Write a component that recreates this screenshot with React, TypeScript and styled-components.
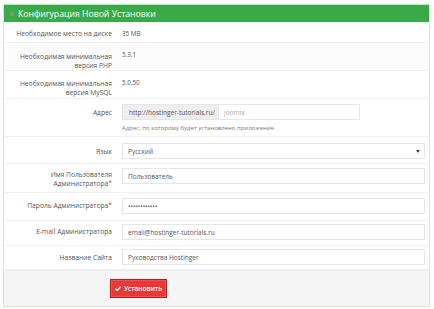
import React from 'react';
import styled, { createGlobalStyle } from 'styled-components';

const GlobalStyle = createGlobalStyle`
  html, body { margin: 0; padding: 0; background: #fff; }
  body { font-family: "Open Sans", "Liberation Sans", sans-serif; color: #555; }
`;

const Panel = styled.div`
  margin: 4px 4px 0 3px;
  border: 1px solid #cfeed1;
  border-top: none;
  background: #fff;
`;

const Header = styled.div`
  display: flex;
  align-items: center;
  gap: 4px;
  height: 17px;
  padding-left: 6px;
  background: #3aaa48;
  border-top: 1px solid #b9e6bd;
  color: #fff;
  font-size: 8.7px;
`;

const HeaderIcon = styled.span`
  width: 4px;
  height: 4px;
  background: #6f9f72;
  border-radius: 1px;
`;

const Row = styled.div<{ $h: number; $pt: number; $alt?: boolean }>`
  display: flex;
  align-items: flex-start;
  box-sizing: border-box;
  height: ${(p) => p.$h}px;
  padding-top: ${(p) => p.$pt}px;
  border-bottom: 1px solid #f1f1f1;
  background: ${(p) => (p.$alt ? '#fcfcfc' : '#fff')};
`;

const Label = styled.div<{ $pt?: number }>`
  width: 108px;
  padding-right: 10px;
  padding-top: ${(p) => p.$pt ?? 0}px;
  text-align: right;
  font-size: 6.7px;
  line-height: 9px;
  color: #555;
`;

const Req = styled.span`
  color: #e53935;
`;

const Field = styled.div`
  flex: 1;
  padding-right: 4px;
  display: flex;
  flex-direction: column;
`;

const Value = styled.div`
  font-size: 6.3px;
  line-height: 9px;
  color: #555;
`;

const InputBox = styled.div<{ $width?: number; $muted?: boolean }>`
  box-sizing: border-box;
  height: 16px;
  ${(p) => (p.$width ? `width: ${p.$width}px;` : '')}
  display: flex;
  align-items: center;
  padding: 0 5px;
  border: 1px solid #e6e6e6;
  background: #fff;
  font-size: 6.5px;
  color: ${(p) => (p.$muted ? '#aaa' : '#555')};
  position: relative;
`;

const Group = styled.div`
  display: flex;
`;

const Addon = styled.div`
  box-sizing: border-box;
  height: 16px;
  width: 96px;
  display: flex;
  align-items: center;
  padding-left: 6px;
  background: #eee;
  border: 1px solid #e6e6e6;
  border-right: none;
  font-size: 6.5px;
  color: #555;
`;

const Help = styled.div`
  margin-top: 4px;
  font-size: 6px;
  color: #777;
`;

const Arrow = styled.span`
  position: absolute;
  right: 4px;
  top: 6px;
  width: 0;
  height: 0;
  border-left: 2px solid transparent;
  border-right: 2px solid transparent;
  border-top: 3px solid #444;
`;

const Footer = styled.div`
  display: flex;
  justify-content: center;
  padding: 8px 156px 8px 0;
  height: 19px;
  background: #f5f5f5;
  border-top: 1px solid #ececec;
`;

const Button = styled.button`
  box-sizing: border-box;
  width: 57px;
  height: 19px;
  display: flex;
  align-items: center;
  justify-content: center;
  gap: 3px;
  padding: 0;
  background: #e53935;
  border: 1px solid #b71c1c;
  box-shadow: inset 0 0 0 1px #ef5350;
  color: #fff;
  font-family: "Open Sans", "Liberation Sans", sans-serif;
  font-size: 6.5px;
  font-weight: 600;
`;

export default function App() {
  return (
    <>
      <GlobalStyle />
      <Panel>
        <Header>
          <HeaderIcon />
          Конфигурация Новой Установки
        </Header>
        <Row $h={21} $pt={7}>
          <Label>Необходимое место на диске</Label>
          <Field><Value>35 MB</Value></Field>
        </Row>
        <Row $h={28} $pt={7} $alt>
          <Label $pt={2}>Необходимая минимальная<br />версия PHP</Label>
          <Field><Value>5.3.1</Value></Field>
        </Row>
        <Row $h={28} $pt={7}>
          <Label $pt={1}>Необходимая минимальная<br />версия MySQL</Label>
          <Field><Value>5.0.50</Value></Field>
        </Row>
        <Row $h={38} $pt={5}>
          <Label $pt={4}>Адрес</Label>
          <Field>
            <Group>
              <Addon>http://hostinger-tutorials.ru/</Addon>
              <InputBox $width={142} $muted>joomla</InputBox>
            </Group>
            <Help>Адрес, по которому будет установлено приложение.</Help>
          </Field>
        </Row>
        <Row $h={27} $pt={6}>
          <Label $pt={4}>Язык</Label>
          <Field>
            <InputBox>Русский<Arrow /></InputBox>
          </Field>
        </Row>
        <Row $h={29} $pt={4}>
          <Label $pt={2}>Имя Пользователя<br />Администратора<Req>*</Req></Label>
          <Field><InputBox>Пользователь</InputBox></Field>
        </Row>
        <Row $h={28} $pt={5}>
          <Label $pt={3}>Пароль Администратора<Req>*</Req></Label>
          <Field><InputBox>••••••••••••</InputBox></Field>
        </Row>
        <Row $h={25} $pt={3}>
          <Label $pt={3}>E-mail Администратора</Label>
          <Field><InputBox>email@hostinger-tutorials.ru</InputBox></Field>
        </Row>
        <Row $h={24} $pt={3}>
          <Label $pt={4}>Название Сайта</Label>
          <Field><InputBox>Руководства Hostinger</InputBox></Field>
        </Row>
        <Footer>
          <Button>
            <svg width="6" height="5" viewBox="0 0 12 10">
              <path d="M1 5.5 L4.5 9 L11 1.5" stroke="#fff" strokeWidth="2.6" fill="none" />
            </svg>
            Установить
          </Button>
        </Footer>
      </Panel>
    </>
  );
}
